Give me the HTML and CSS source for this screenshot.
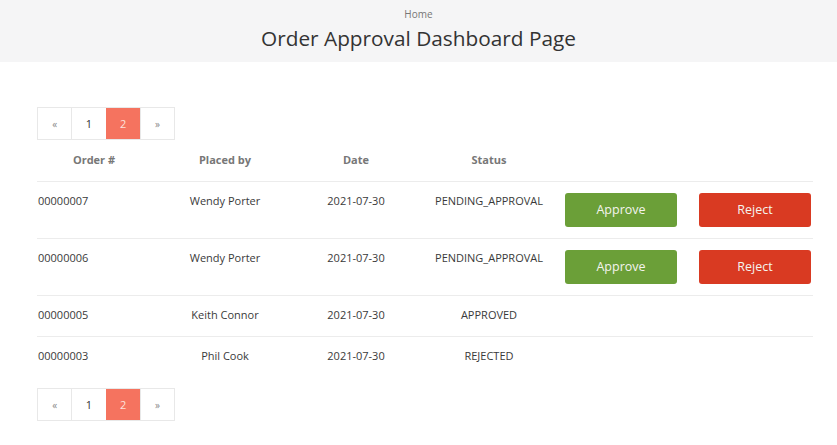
FILE: index.html
```html
<!DOCTYPE html>
<html>
<head>
<meta charset="utf-8">
<link rel="stylesheet" href="styles.css">
</head>
<body>
<header class="page-header">
  <div class="crumb">Home</div>
  <h1 class="title">Order Approval Dashboard Page</h1>
</header>
<main class="content">
  <nav class="pager">
    <span class="pg arrow">«</span>
    <span class="pg">1</span>
    <span class="pg active">2</span>
    <span class="pg arrow">»</span>
  </nav>
  <table class="orders">
    <colgroup>
      <col class="c1"><col class="c2"><col class="c3"><col class="c4"><col class="c5"><col class="c6">
    </colgroup>
    <thead>
      <tr><th>Order #</th><th>Placed by</th><th>Date</th><th>Status</th><th></th><th></th></tr>
    </thead>
    <tbody>
      <tr>
        <td class="num">00000007</td><td>Wendy Porter</td><td>2021-07-30</td><td>PENDING_APPROVAL</td>
        <td class="act"><button class="btn approve">Approve</button></td>
        <td class="act"><button class="btn reject">Reject</button></td>
      </tr>
      <tr>
        <td class="num">00000006</td><td>Wendy Porter</td><td>2021-07-30</td><td>PENDING_APPROVAL</td>
        <td class="act"><button class="btn approve">Approve</button></td>
        <td class="act"><button class="btn reject">Reject</button></td>
      </tr>
      <tr>
        <td class="num">00000005</td><td>Keith Connor</td><td>2021-07-30</td><td>APPROVED</td><td></td><td></td>
      </tr>
      <tr class="last">
        <td class="num">00000003</td><td>Phil Cook</td><td>2021-07-30</td><td>REJECTED</td><td></td><td></td>
      </tr>
    </tbody>
  </table>
  <nav class="pager bottom">
    <span class="pg arrow">«</span>
    <span class="pg">1</span>
    <span class="pg active">2</span>
    <span class="pg arrow">»</span>
  </nav>
</main>
</body>
</html>
```
FILE: styles.css
```css
* { box-sizing: border-box; }
html, body { margin: 0; padding: 0; background: #fff; }
body {
  font-family: "Open Sans", "Liberation Sans", sans-serif;
  color: #444;
  font-size: 11px;
}
.page-header {
  background: #f5f5f6;
  height: 62px;
  text-align: center;
  padding-top: 7px;
}
.crumb {
  font-size: 10px;
  color: #777;
  line-height: 14px;
}
.title {
  margin: 2px 0 0 0;
  font-size: 20.8px;
  font-weight: 400;
  line-height: 30px;
  color: #333;
}
.content {
  padding: 45px 24px 0 37px;
}
.pager {
  display: flex;
  width: 138px;
  height: 33px;
  border: 1px solid #e8e8e8;
}
.pager.bottom { margin-top: 11px; }
.pg {
  flex: 1;
  display: flex;
  align-items: center;
  justify-content: center;
  border-left: 1px solid #e8e8e8;
  color: #333;
  font-size: 11px;
}
.pg:first-child { border-left: none; }
.pg.arrow { color: #888; font-size: 10px; }
.pg.active { background: #f5735f; color: #fde2dc; border-left-color: #f5735f; }
.orders {
  width: 776px;
  border-collapse: collapse;
  table-layout: fixed;
}
.c1 { width: 114px; }
.c2 { width: 148px; }
.c3 { width: 114px; }
.c4 { width: 152px; }
.c5 { width: 134px; }
.c6 { width: 114px; }
.orders th {
  font-weight: 700;
  color: #777;
  height: 41px;
  padding: 0;
  text-align: center;
  vertical-align: middle;
  line-height: 14px;
  border-bottom: 1px solid #ececec;
}
.orders td {
  text-align: center;
  vertical-align: top;
  padding: 12px 0 14px 0;
  line-height: 14px;
  height: 41px;
  border-bottom: 1px solid #ececec;
  color: #3a3a3a;
}
.orders tr.last td { border-bottom: none; }
.orders td.num { text-align: left; padding-left: 1px; }
.orders td.act {
  text-align: left;
  padding: 11px 0 11px 0;
}
.btn {
  width: 112px;
  height: 34px;
  border: none;
  border-radius: 3px;
  color: #f4f4ee;
  font-family: "Open Sans", "Liberation Sans", sans-serif;
  font-size: 12.5px;
  display: block;
  padding: 0;
}
.btn.approve { background: #6b9f38; }
.btn.reject { background: #d93a22; }
```
